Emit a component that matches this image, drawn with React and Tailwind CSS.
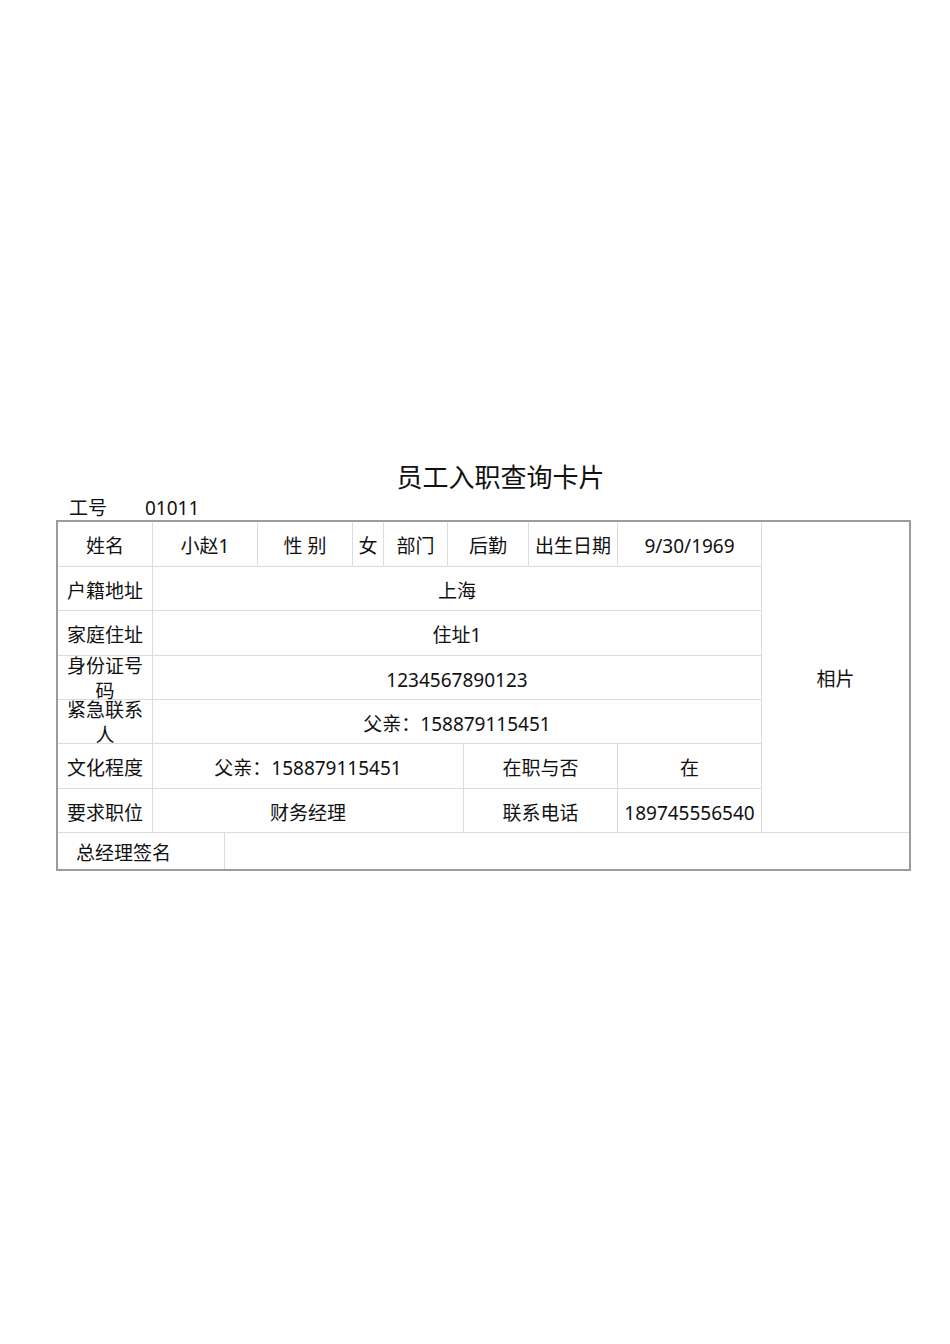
import React from "react";

const FONT = { fontFamily: '"Noto Sans", "Noto Sans CJK SC", sans-serif' };

function Cell({ className = "", children, last = false, bottom = false }) {
  return (
    <div
      className={
        "flex items-center justify-center text-center border-[#dcdcdc] " +
        (last ? "" : "border-r ") +
        (bottom ? "" : "border-b ") +
        className
      }
    >
      {children}
    </div>
  );
}

export default function App() {
  return (
    <div className="w-[950px] h-[1344px] bg-white text-[#111] overflow-hidden" style={FONT}>
      <div className="pt-[461px] pl-[56px]">
        <div className="w-[855px] h-[33px] pl-[34px] text-center text-[26px] leading-[32px]">
          员工入职查询卡片
        </div>
        <div className="h-[26px] pt-[3px] flex text-[19px] leading-[22px]">
          <span className="ml-[13px] w-[76px]">工号</span>
          <span>01011</span>
        </div>
        <div className="w-[855px] border-2 border-[#9c9c9c]">
          <div className="grid grid-cols-[95px_72px_33px_95px_31px_64px_16px_65px_89px_144px_147px] grid-rows-[45px_44px_45px_44px_44px_45px_44px_36px] text-[19px] leading-[24px]">
            {/* Row 1 */}
            <Cell className="col-start-1 row-start-1 pt-[4px]">姓名</Cell>
            <Cell className="col-start-2 col-span-2 row-start-1 pt-[4px]">小赵1</Cell>
            <Cell className="col-start-4 row-start-1 pt-[4px]">性 别</Cell>
            <Cell className="col-start-5 row-start-1 pt-[4px]">女</Cell>
            <Cell className="col-start-6 row-start-1 pt-[4px]">部门</Cell>
            <Cell className="col-start-7 col-span-2 row-start-1 pt-[4px]">后勤</Cell>
            <Cell className="col-start-9 row-start-1 pt-[4px]">出生日期</Cell>
            <Cell className="col-start-10 row-start-1 pt-[4px]">9/30/1969</Cell>
            <Cell className="col-start-11 row-start-1 row-span-7 pt-[4px]" last>相片</Cell>

            {/* Row 2 */}
            <Cell className="col-start-1 row-start-2 pt-[4px]">户籍地址</Cell>
            <Cell className="col-start-2 col-span-9 row-start-2 pt-[4px]">上海</Cell>

            {/* Row 3 */}
            <Cell className="col-start-1 row-start-3 pt-[4px]">家庭住址</Cell>
            <Cell className="col-start-2 col-span-9 row-start-3 pt-[4px]">住址1</Cell>

            {/* Row 4 */}
            <Cell className="col-start-1 row-start-4 px-2 pt-[2px] leading-[25px]">身份证号码</Cell>
            <Cell className="col-start-2 col-span-9 row-start-4 pt-[4px]">1234567890123</Cell>

            {/* Row 5 */}
            <Cell className="col-start-1 row-start-5 px-2 pt-[2px] leading-[25px]">紧急联系人</Cell>
            <Cell className="col-start-2 col-span-9 row-start-5 pt-[4px]">父亲：158879115451</Cell>

            {/* Row 6 */}
            <Cell className="col-start-1 row-start-6 pt-[4px]">文化程度</Cell>
            <Cell className="col-start-2 col-span-6 row-start-6 pt-[4px]">父亲：158879115451</Cell>
            <Cell className="col-start-8 col-span-2 row-start-6 pt-[4px]">在职与否</Cell>
            <Cell className="col-start-10 row-start-6 pt-[4px]">在</Cell>

            {/* Row 7 */}
            <Cell className="col-start-1 row-start-7 pt-[4px]">要求职位</Cell>
            <Cell className="col-start-2 col-span-6 row-start-7 pt-[4px]">财务经理</Cell>
            <Cell className="col-start-8 col-span-2 row-start-7 pt-[4px]">联系电话</Cell>
            <Cell className="col-start-10 row-start-7 pt-[4px]">189745556540</Cell>

            {/* Row 8 */}
            <Cell className="col-start-1 col-span-2 row-start-8 !justify-start pl-[18px] pt-[3px]" bottom>
              总经理签名
            </Cell>
            <Cell className="col-start-3 col-span-9 row-start-8" bottom last>
              {""}
            </Cell>
          </div>
        </div>
      </div>
    </div>
  );
}
